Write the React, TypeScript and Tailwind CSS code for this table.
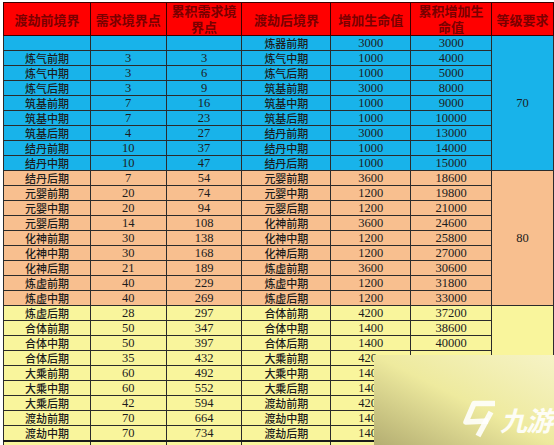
import React from 'react';

type Row = [string, string, string, string, string, string];

const blue: Row[] = [
  ['', '', '', '炼器前期', '3000', '3000'],
  ['炼气前期', '3', '3', '炼气中期', '1000', '4000'],
  ['炼气中期', '3', '6', '炼气后期', '1000', '5000'],
  ['炼气后期', '3', '9', '筑基前期', '3000', '8000'],
  ['筑基前期', '7', '16', '筑基中期', '1000', '9000'],
  ['筑基中期', '7', '23', '筑基后期', '1000', '10000'],
  ['筑基后期', '4', '27', '结丹前期', '3000', '13000'],
  ['结丹前期', '10', '37', '结丹中期', '1000', '14000'],
  ['结丹中期', '10', '47', '结丹后期', '1000', '15000'],
];

const orange: Row[] = [
  ['结丹后期', '7', '54', '元婴前期', '3600', '18600'],
  ['元婴前期', '20', '74', '元婴中期', '1200', '19800'],
  ['元婴中期', '20', '94', '元婴后期', '1200', '21000'],
  ['元婴后期', '14', '108', '化神前期', '3600', '24600'],
  ['化神前期', '30', '138', '化神中期', '1200', '25800'],
  ['化神中期', '30', '168', '化神后期', '1200', '27000'],
  ['化神后期', '21', '189', '炼虚前期', '3600', '30600'],
  ['炼虚前期', '40', '229', '炼虚中期', '1200', '31800'],
  ['炼虚中期', '40', '269', '炼虚后期', '1200', '33000'],
];

// last rows of the two value columns sit under the watermark in the picture
const yellow: Row[] = [
  ['炼虚后期', '28', '297', '合体前期', '4200', '37200'],
  ['合体前期', '50', '347', '合体中期', '1400', '38600'],
  ['合体中期', '50', '397', '合体后期', '1400', '40000'],
  ['合体后期', '35', '432', '大乘前期', '420', ''],
  ['大乘前期', '60', '492', '大乘中期', '140', ''],
  ['大乘中期', '60', '552', '大乘后期', '140', ''],
  ['大乘后期', '42', '594', '渡劫前期', '420', ''],
  ['渡劫前期', '70', '664', '渡劫中期', '140', ''],
  ['渡劫中期', '70', '734', '渡劫后期', '140', ''],
];

const cell = 'border border-[#2b2b2b] p-0 text-center align-middle leading-[14px] text-[#1c1c1c]';
const cjk = "font-['Noto_Sans_CJK_SC',sans-serif] text-[11px] font-medium";
const num = "font-['Liberation_Serif',serif] text-[12.5px]";
const head =
  "border border-[#3a0000] p-0 text-center align-middle font-['Noto_Sans_CJK_SC',sans-serif] text-[13px] font-bold leading-[15px] text-[#7a0000]";

function Section({ rows, bg, level, extra }: { rows: Row[]; bg: string; level: string; extra?: boolean }) {
  return (
    <>
      {rows.map((r, i) => (
        <tr key={i} className={`h-[15px] ${bg}`}>
          <td className={`${cell} ${cjk}`}>{r[0]}</td>
          <td className={`${cell} ${num}`}>{r[1]}</td>
          <td className={`${cell} ${num}`}>{r[2]}</td>
          <td className={`${cell} ${cjk}`}>{r[3]}</td>
          <td className={`${cell} ${num} ${r[4].length === 3 ? 'text-left pl-[27px]' : ''}`}>{r[4]}</td>
          <td className={`${cell} ${num}`}>{r[5]}</td>
          {i === 0 && (
            <td rowSpan={rows.length + (extra ? 1 : 0)} className={`${cell} ${num}`}>
              {level}
            </td>
          )}
        </tr>
      ))}
    </>
  );
}

function Logo() {
  return (
    <div className="absolute right-[2px] top-[400px] flex items-center gap-[3px] whitespace-nowrap">
      <svg width="36" height="38" viewBox="0 0 36 38">
        <path d="M34 3.5 L13 3.5 L5 22 L27 21" fill="none" stroke="rgba(255,255,255,0.88)" strokeWidth="5.5" strokeLinejoin="round" />
        <path d="M30 12 L17 36" fill="none" stroke="rgba(255,255,255,0.88)" strokeWidth="5.5" />
      </svg>
      <span className="font-['Noto_Sans_CJK_SC',sans-serif] text-[27px] font-bold italic leading-none tracking-[-1px] text-white/90">
        九游
      </span>
    </div>
  );
}

export default function App() {
  return (
    <div className="relative h-[445px] w-[554px] overflow-hidden bg-white pl-[3px] pt-[2px]">
      <table className="table-fixed border-collapse">
        <colgroup>
          <col className="w-[87px]" />
          <col className="w-[76px]" />
          <col className="w-[76px]" />
          <col className="w-[89px]" />
          <col className="w-[80px]" />
          <col className="w-[81px]" />
          <col className="w-[62px]" />
        </colgroup>
        <thead>
          <tr className="h-[31px] bg-[#ff0000]">
            <th className={head}>渡劫前境界</th>
            <th className={head}>需求境界点</th>
            <th className={`${head} leading-[16px]`}>
              累积需求境
              <br />
              界点
            </th>
            <th className={head}>渡劫后境界</th>
            <th className={head}>增加生命值</th>
            <th className={`${head} leading-[16px]`}>
              累积增加生
              <br />
              命值
            </th>
            <th className={head}>等级要求</th>
          </tr>
        </thead>
        <tbody>
          <Section rows={blue} bg="bg-[#18b3ea]" level="70" />
          <Section rows={orange} bg="bg-[#f8bf8f]" level="80" />
          <Section rows={yellow} bg="bg-[#f9f59c]" level="" extra />
          <tr className="h-[15px] bg-[#f9f59c]">
            {[0, 1, 2, 3, 4, 5].map((k) => (
              <td key={k} className={`${cell} border-t-2 border-t-[#1a1a1a]`} />
            ))}
          </tr>
        </tbody>
      </table>

      {/* watermark */}
      <div className="absolute left-[374px] top-[355px] h-[90px] w-[180px] bg-linear-to-tr from-[#b4ae72] via-[#eeea9e] to-[#f6f3c6]" />
      <Logo />
    </div>
  );
}
